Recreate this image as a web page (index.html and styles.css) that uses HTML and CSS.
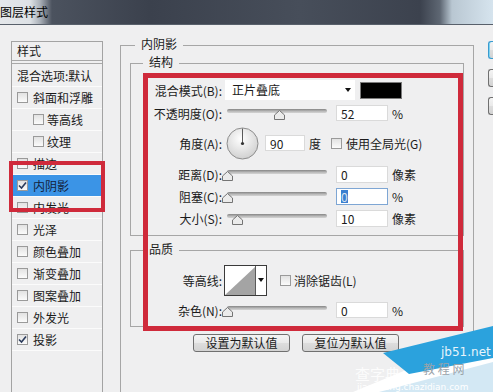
FILE: index.html
```html
<!DOCTYPE html>
<html lang="zh-CN">
<head>
  <meta charset="UTF-8">
  <title>图层样式</title>
  <link rel="stylesheet" href="styles.css">
</head>
<body>
  <div class="titlebar"><span class="title">图层样式</span></div>

  <div class="content">
    <!-- 左侧样式列表 -->
    <div class="styles-col">
      <div class="style-list">
        <div class="list-head">样式</div>
        <div class="list-item blend">混合选项:默认</div>
        <div class="list-item"><span class="cb"></span>斜面和浮雕</div>
        <div class="list-item sub"><span class="cb"></span>等高线</div>
        <div class="list-item sub"><span class="cb"></span>纹理</div>
        <div class="list-item"><span class="cb"></span>描边</div>
        <div class="list-item selected"><span class="cb checked"><svg width="9" height="9"><path d="M1 4.5 L3.5 7 L8 1.5" fill="none" stroke="#2b3b5c" stroke-width="1.6"/></svg></span>内阴影</div>
        <div class="list-item"><span class="cb"></span>内发光</div>
        <div class="list-item"><span class="cb"></span>光泽</div>
        <div class="list-item"><span class="cb"></span>颜色叠加</div>
        <div class="list-item"><span class="cb"></span>渐变叠加</div>
        <div class="list-item"><span class="cb"></span>图案叠加</div>
        <div class="list-item"><span class="cb"></span>外发光</div>
        <div class="list-item"><span class="cb checked"><svg width="9" height="9"><path d="M1 4.5 L3.5 7 L8 1.5" fill="none" stroke="#2b3b5c" stroke-width="1.6"/></svg></span>投影</div>
      </div>
    </div>

    <!-- 内阴影设置 -->
    <div class="settings">
      <div class="group outer">
        <span class="legend">内阴影</span>

        <div class="group inner">
          <span class="legend">结构</span>

          <div class="row row-blend">
            <span class="label">混合模式(B):</span>
            <div class="select">正片叠底<span class="arrow"></span></div>
            <div class="swatch"></div>
          </div>

          <div class="row row-opacity">
            <span class="label">不透明度(O):</span>
            <div class="slider"><div class="track"></div><svg class="thumb" style="left: 47px" width="11" height="10"><polygon points="5.5,0.5 10.5,5 10.5,9.5 0.5,9.5 0.5,5" fill="#ebebeb" stroke="#747474"/></svg></div>
            <div class="input">52</div>
            <span class="unit">%</span>
          </div>

          <div class="row row-angle">
            <span class="label">角度(A):</span>
            <svg class="dial" width="33" height="33">
              <defs>
                <radialGradient id="dialFill" cx="45%" cy="35%" r="70%">
                  <stop offset="0" stop-color="#ffffff"/>
                  <stop offset="1" stop-color="#cdcdcd"/>
                </radialGradient>
              </defs>
              <circle cx="16.5" cy="16.5" r="15.5" fill="url(#dialFill)" stroke="#8d8d8d"/>
              <line x1="16.5" y1="16.5" x2="16.5" y2="1.5" stroke="#5a5a5a"/>
              <circle cx="16.5" cy="16.5" r="1.6" fill="#333"/>
            </svg>
            <div class="input angle">90</div>
            <span class="unit">度</span>
            <span class="cb global"></span>
            <span class="check-text">使用全局光(G)</span>
          </div>

          <div class="row row-num first">
            <span class="label">距离(D):</span>
            <div class="slider"><div class="track"></div><svg class="thumb" style="left: -5px" width="11" height="10"><polygon points="5.5,0.5 10.5,5 10.5,9.5 0.5,9.5 0.5,5" fill="#ebebeb" stroke="#747474"/></svg></div>
            <div class="input">0</div>
            <span class="unit">像素</span>
          </div>

          <div class="row row-num">
            <span class="label">阻塞(C):</span>
            <div class="slider"><div class="track"></div><svg class="thumb" style="left: -5px" width="11" height="10"><polygon points="5.5,0.5 10.5,5 10.5,9.5 0.5,9.5 0.5,5" fill="#ebebeb" stroke="#747474"/></svg></div>
            <div class="input focused"><span class="sel">0</span></div>
            <span class="unit">%</span>
          </div>

          <div class="row row-num">
            <span class="label">大小(S):</span>
            <div class="slider"><div class="track"></div><svg class="thumb" style="left: 5px" width="11" height="10"><polygon points="5.5,0.5 10.5,5 10.5,9.5 0.5,9.5 0.5,5" fill="#ebebeb" stroke="#747474"/></svg></div>
            <div class="input">10</div>
            <span class="unit">像素</span>
          </div>
        </div>

        <div class="group inner quality">
          <span class="legend">品质</span>

          <div class="row row-contour">
            <span class="label">等高线:</span>
            <div class="contour">
              <svg class="contour-curve" width="31" height="29"><polygon points="0,29 31,0 31,29" fill="#a4a4a4"/></svg>
              <div class="contour-arrow"><span class="arrow"></span></div>
            </div>
            <span class="cb aa"></span>
            <span class="check-text">消除锯齿(L)</span>
          </div>

          <div class="row row-noise">
            <span class="label">杂色(N):</span>
            <div class="slider"><div class="track"></div><svg class="thumb" style="left: -5px" width="11" height="10"><polygon points="5.5,0.5 10.5,5 10.5,9.5 0.5,9.5 0.5,5" fill="#ebebeb" stroke="#747474"/></svg></div>
            <div class="input">0</div>
            <span class="unit">%</span>
          </div>
        </div>

        <div class="buttons">
          <div class="btn">设置为默认值</div>
          <div class="btn">复位为默认值</div>
        </div>
      </div>
    </div>

    <!-- 右侧按钮, 只露出左边缘 -->
    <div class="side">
      <div class="side-btn default"></div>
      <div class="side-btn"></div>
      <div class="side-btn"></div>
    </div>

    <!-- 红框标注 -->
    <div class="mark mark-list"></div>
    <div class="mark mark-main"></div>
  </div>

  <svg class="watermark" width="140" height="70" viewBox="0 0 140 70">
    <polygon points="0,70 140,12 140,70" fill="#ffffff"/>
    <polygon points="30,31 140,4 140,36 56,52" fill="#2ba2dd"/>
    <polygon points="26,70 140,40 140,70" fill="#d3e8f4"/>
    <text x="88" y="34" font-family="DejaVu Sans, sans-serif" font-size="12" fill="#e8f4fb">jb51.net</text>
    <text x="70" y="52" font-family="Noto Sans CJK SC, sans-serif" font-size="12" fill="#9aa3aa">教 程 网</text>
    <text x="2" y="58" font-family="Noto Sans CJK SC, sans-serif" font-size="15" fill="#ffffff" opacity="0.85">查字典</text>
    <text x="4" y="68" font-family="DejaVu Sans, sans-serif" font-size="9" fill="#ffffff">jiaocheng.chazidian.com</text>
  </svg>
</body>
</html>
```

FILE: styles.css
```css
* {
  box-sizing: border-box;
}
body {
  margin: 0;
  width: 493px;
  height: 392px;
  overflow: hidden;
  position: relative;
  background: #efeff0;
  font-family: "Noto Sans CJK SC", sans-serif;
  font-size: 12px;
  color: #1b1b1b;
}

/* 标题栏 */
.titlebar {
  height: 25px;
  border-bottom: 1px solid #58606b;
  background: linear-gradient(to right, #e4e7ea 0, #dde1e5 30px, #aab0b8 40px, #4b525e 52px, #3b414d 150px, #474e5a 300px, #3c424e 420px, #5e6773 440px, #b9c7d2 452px, #d6e4ee 100%);
}
.title {
  line-height: 23px;
  color: #000;
}

.content {
  display: flex;
  position: relative;
  height: 367px;
}

/* 样式列表 */
.styles-col {
  flex-shrink: 0;
  padding: 16px 0 0 11px;
}
.style-list {
  width: 92px;
  height: 351px;
  border: 1px solid #a3a3a3;
  border-bottom: none;
}
.list-head {
  height: 22px;
  line-height: 18px;
  padding-left: 5px;
  border-bottom: 4px double #a8a8a8;
}
.list-item {
  height: 22px;
  display: flex;
  align-items: center;
  padding-left: 5px;
  border-bottom: 1px solid #fbfbfb;
  white-space: nowrap;
}
.list-item.blend {
  height: 23px;
}
.list-item.sub {
  padding-left: 21px;
}
.list-item.selected {
  background: #3b94e6;
  color: #14223a;
}
.cb {
  flex-shrink: 0;
  width: 11px;
  height: 11px;
  margin-right: 5px;
  border: 1px solid #9a9a9a;
  background: linear-gradient(#e2e2e2, #fbfbfb);
  display: flex;
  align-items: center;
  justify-content: center;
}
.list-item.sub .cb {
  margin-right: 3px;
}

/* 设置区 */
.settings {
  flex-shrink: 0;
  margin-left: 17px;
  padding-top: 20px;
}
.group {
  border: 1px solid #a6a6a6;
}
.group.outer {
  width: 354px;
  height: 347px;
  border-bottom: none;
}
.legend {
  display: block;
  width: fit-content;
  height: 14px;
  line-height: 14px;
  margin: -9px 0 0 14px;
  padding: 0 6px;
  background: #efeff0;
}
.group.inner {
  width: 334px;
  margin: 12px 0 0 9px;
  padding-bottom: 8px;
}
.group.inner .legend {
  margin-left: 12px;
}
.group.quality {
  margin-top: 14px;
}

.row {
  display: flex;
  align-items: center;
  white-space: nowrap;
}
.label {
  flex-shrink: 0;
  width: 94px;
  padding-right: 3px;
  text-align: right;
}
.row-blend {
  height: 20px;
  margin-top: 11px;
}
.row-opacity {
  height: 16px;
  margin-top: 5px;
}
.row-angle {
  height: 32px;
  margin-top: 6px;
}
.row-num {
  height: 17px;
  margin-top: 5px;
}
.row-num.first {
  margin-top: 7px;
}
.row-contour {
  height: 31px;
  margin-top: 9px;
}
.row-noise {
  height: 16px;
  margin-top: 6px;
}

.select {
  position: relative;
  width: 130px;
  height: 20px;
  padding-left: 7px;
  line-height: 20px;
  background: #fff;
}
.arrow {
  position: absolute;
  width: 0;
  height: 0;
  border-left: 3.5px solid transparent;
  border-right: 3.5px solid transparent;
  border-top: 4px solid #111;
}
.select .arrow {
  right: 4px;
  top: 8px;
}
.swatch {
  width: 42px;
  height: 17px;
  margin-left: 5px;
  background: #000;
  border: 1px solid #7b7b7b;
}

.slider {
  position: relative;
  flex-shrink: 0;
  width: 100px;
  height: 16px;
  margin-left: 2px;
  align-self: flex-start;
}
.track {
  position: absolute;
  left: 0;
  right: 0;
  top: 4px;
  height: 4px;
  border-radius: 2px;
  background: linear-gradient(#858585, #bcbcbc 60%, #d4d4d4);
}
.thumb {
  position: absolute;
  top: 5px;
}
.input {
  flex-shrink: 0;
  width: 52px;
  height: 100%;
  margin-left: 9px;
  padding-left: 4px;
  background: #fff;
  border: 1px solid #dadada;
  display: flex;
  align-items: center;
}
.input.angle {
  width: 40px;
  height: 16px;
  margin-left: 6px;
}
.input.focused {
  border-color: #7ea6d4;
}
.sel {
  background: #3a7fd0;
  color: #d8e2ee;
  line-height: 13px;
}
.unit {
  margin-left: 4px;
}
.dial {
  margin-left: 1px;
}
.cb.global {
  margin: 0 4px 0 10px;
}
.cb.aa {
  margin: 0 3px 0 13px;
}

.contour {
  display: flex;
  width: 43px;
  height: 31px;
  margin-left: -1px;
  border: 1px solid #3a3a3a;
  background: #fff;
}
.contour-curve {
  border-right: 1px solid #5a5a5a;
}
.contour-arrow {
  position: relative;
  flex: 1;
}
.contour-arrow .arrow {
  left: 2px;
  top: 12px;
}

.buttons {
  display: flex;
  gap: 12px;
  margin: 7px 0 0 72px;
}
.btn {
  width: 97px;
  height: 18px;
  line-height: 16px;
  text-align: center;
  border: 1px solid #707070;
  border-radius: 3px;
  background: linear-gradient(#f4f4f4, #e9e9e9 50%, #dddddd 51%, #d3d3d3);
}

/* 右侧被截掉的按钮 */
.side {
  flex-shrink: 0;
  display: flex;
  flex-direction: column;
  gap: 10px;
  margin-left: 14px;
  padding-top: 16px;
}
.side-btn {
  width: 5px;
  height: 18px;
  border: 1px solid #707070;
  border-right: none;
  border-radius: 3px 0 0 3px;
  background: linear-gradient(#f4f4f4, #e9e9e9 50%, #dddddd 51%, #d3d3d3);
}
.side-btn.default {
  border-color: #3a9bd0;
  box-shadow: inset 1px 0 0 #7fd3f0;
}

/* 红框标注 */
.mark {
  position: absolute;
  border: 5px solid #cf2a3b;
}
.mark-list {
  left: 9px;
  top: 136px;
  width: 96px;
  height: 51px;
  border-width: 4px;
}
.mark-main {
  left: 143px;
  top: 48px;
  width: 320px;
  height: 258px;
}

/* 水印 */
.watermark {
  position: absolute;
  left: 353px;
  top: 322px;
}
```
